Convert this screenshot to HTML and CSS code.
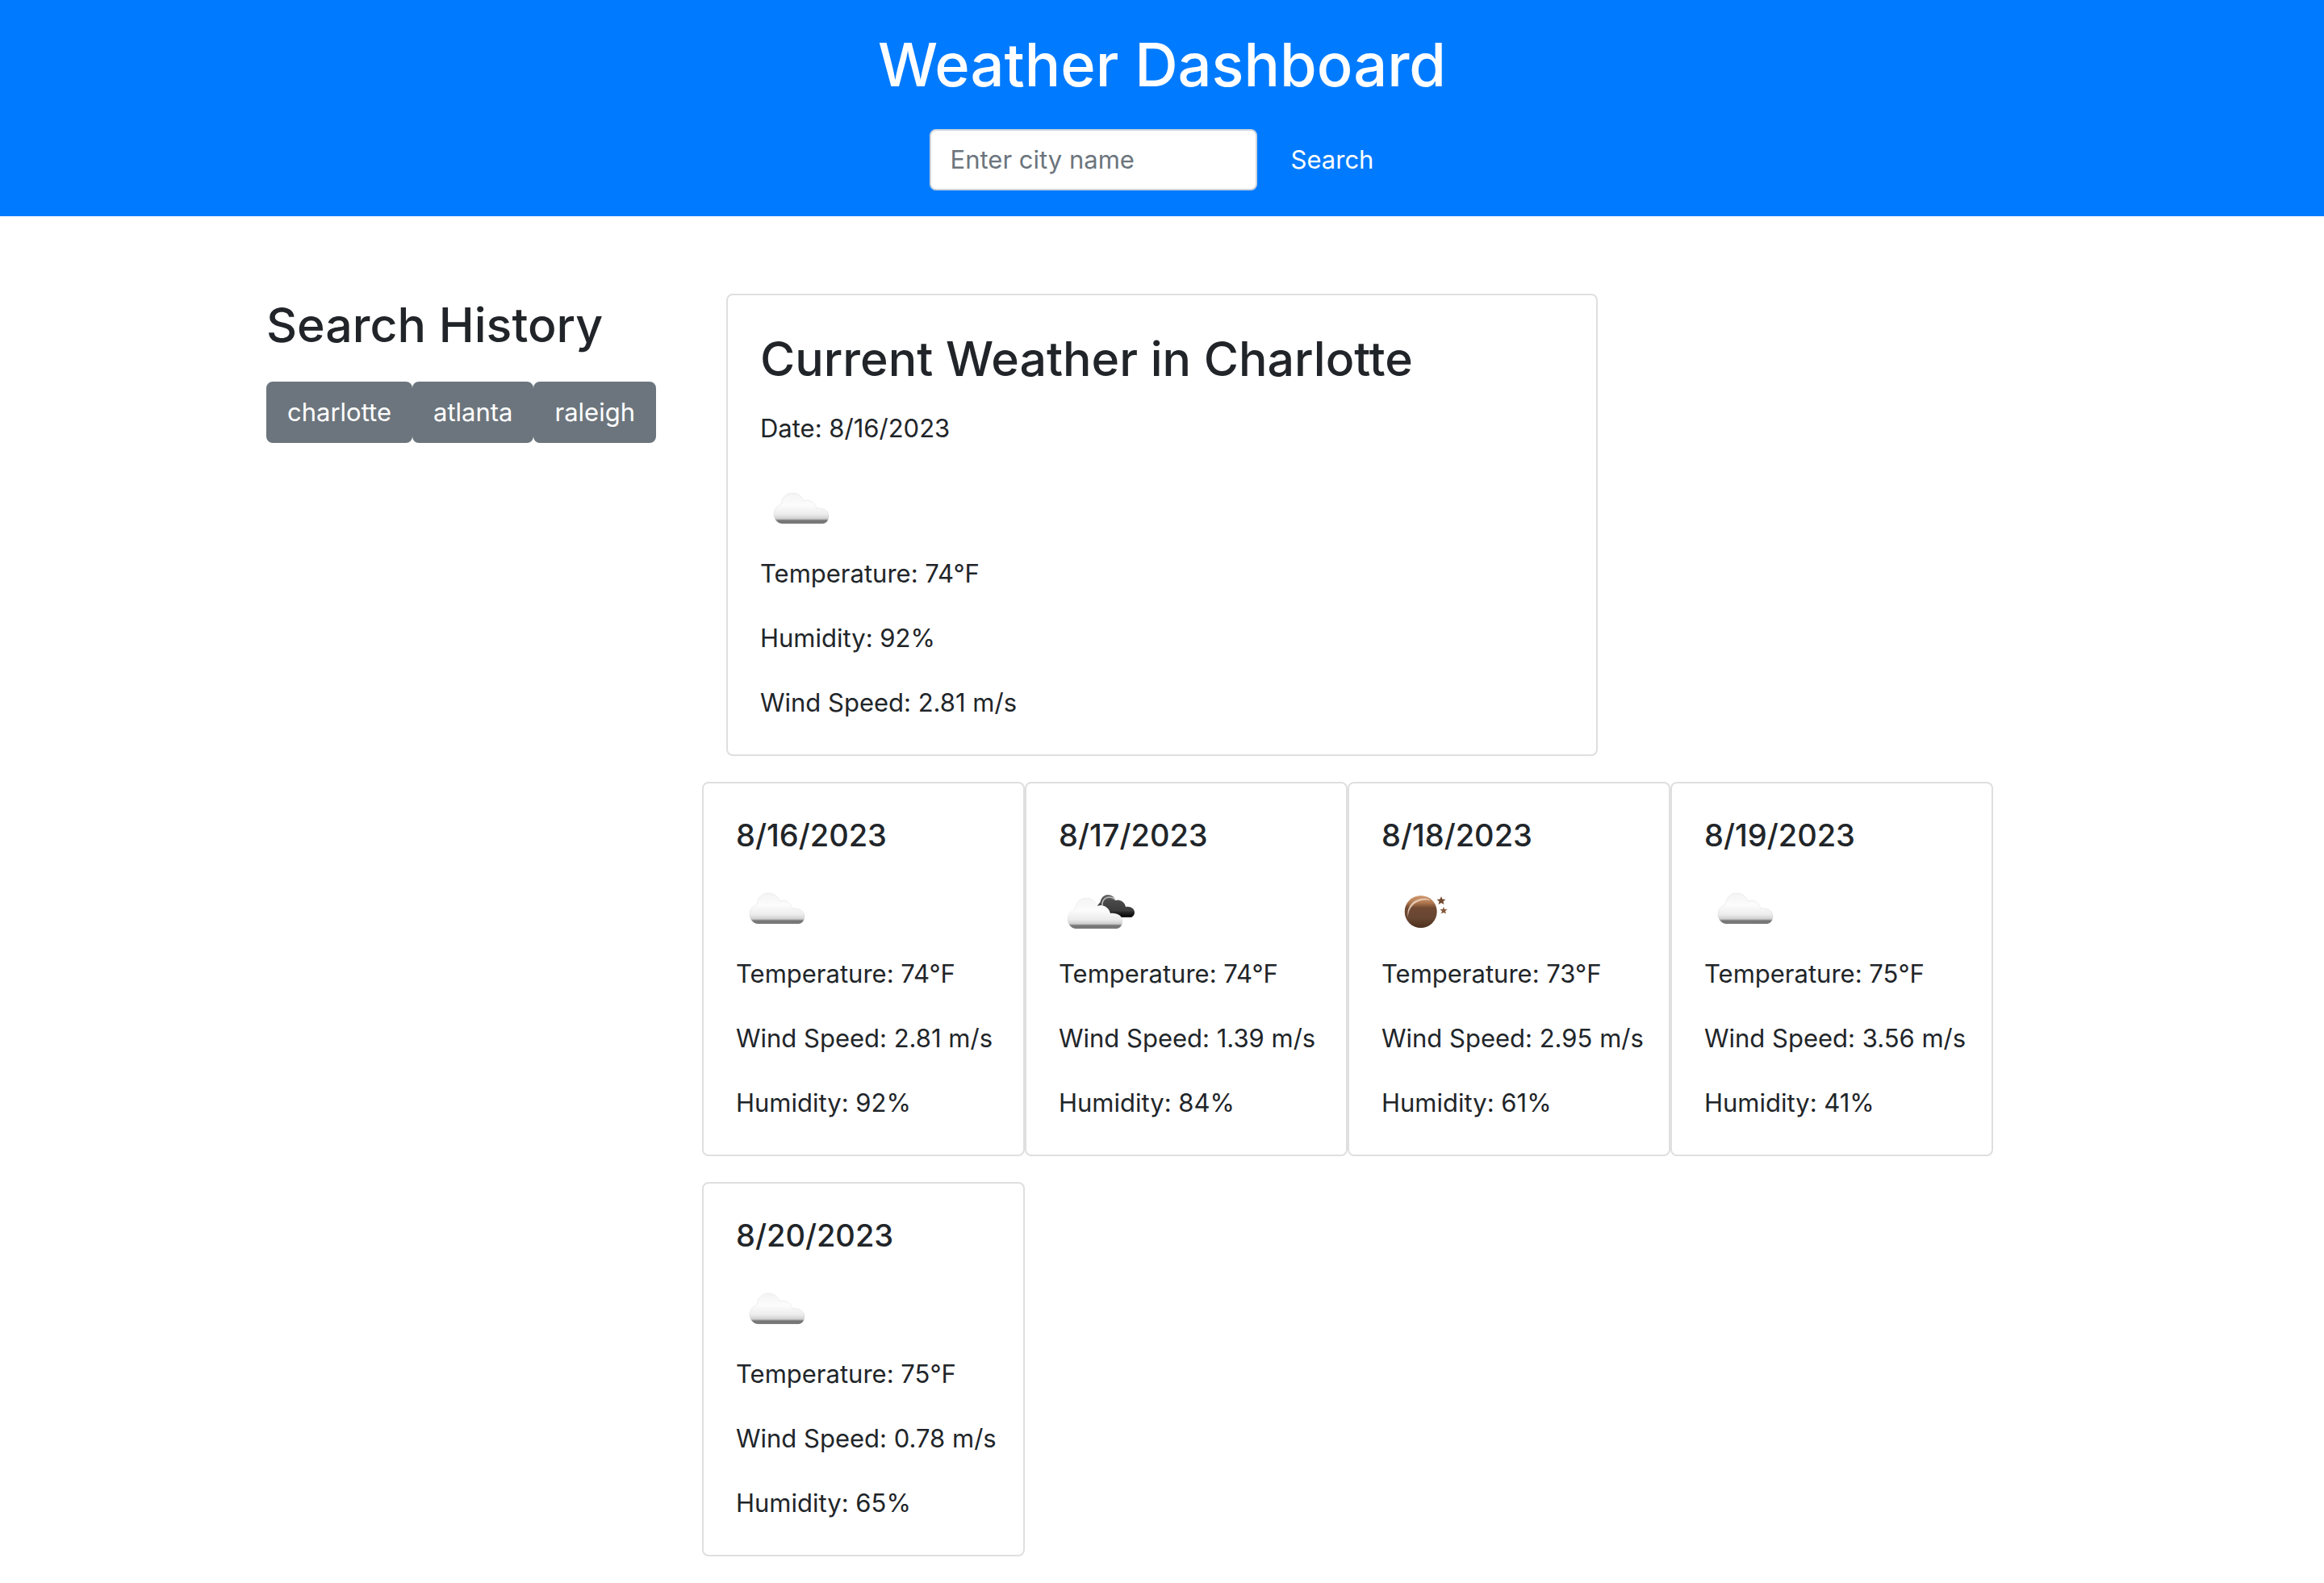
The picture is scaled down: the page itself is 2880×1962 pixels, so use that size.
FILE: index.html
```html
<!DOCTYPE html>
<html lang="en">
<head>
  <meta charset="utf-8">
  <meta name="viewport" content="width=device-width, initial-scale=1">
  <title>Weather Dashboard</title>
  <link rel="stylesheet" href="styles.css">
</head>
<body>
  <svg class="sprite" aria-hidden="true">
    <defs>
      <linearGradient id="cloud-fill" x1="0" y1="0" x2="0" y2="1">
        <stop offset="0" stop-color="#f4f4f4"/>
        <stop offset="0.4" stop-color="#fcfcfc"/>
        <stop offset="0.7" stop-color="#ececec"/>
        <stop offset="0.84" stop-color="#cfcfcf"/>
        <stop offset="0.9" stop-color="#747474"/>
        <stop offset="1" stop-color="#7c7c7c"/>
      </linearGradient>
      <linearGradient id="dark-fill" x1="0" y1="0" x2="0" y2="1">
        <stop offset="0" stop-color="#6a6a6a"/>
        <stop offset="0.3" stop-color="#484848"/>
        <stop offset="0.7" stop-color="#3c3c3c"/>
        <stop offset="0.9" stop-color="#0c0c0c"/>
        <stop offset="1" stop-color="#222222"/>
      </linearGradient>
      <linearGradient id="moon-fill" x1="0" y1="0" x2="0" y2="1">
        <stop offset="0" stop-color="#d29a72"/>
        <stop offset="0.22" stop-color="#b07850"/>
        <stop offset="0.38" stop-color="#704830"/>
        <stop offset="0.7" stop-color="#684630"/>
        <stop offset="1" stop-color="#4c3020"/>
      </linearGradient>
      <filter id="soft" x="-10%" y="-10%" width="120%" height="120%">
        <feGaussianBlur stdDeviation="0.7"/>
      </filter>
      <path id="cloud-shape" d="M27 62C20 61 17 55 17 50C17 44 21 40 26 38C27 30 32 24 40 24C47 24 52 28 54 34C60 31 68 35 70 43C78 42 85 46 85 52C85 57 83 61 78 62Z"/>
    </defs>
    <symbol id="cloud" viewBox="0 0 100 100">
      <use href="#cloud-shape" fill="url(#cloud-fill)" stroke="#000" stroke-opacity="0.06" stroke-width="1" filter="url(#soft)"/>
    </symbol>
    <symbol id="clouds" viewBox="0 0 100 100">
      <g filter="url(#soft)">
        <path d="M48 40C49 37 52 36 52 33C54 28 57 26 61 26C66 26 69 29 70 33C76 31 82 35 83 41C89 40 94 43 94 48C94 51 92 53 90 54H66L50 41Z" fill="url(#dark-fill)"/>
        <path d="M54 40C53 34 57 29 63 29C66 29 68 30 70 32" fill="none" stroke="#bdbdbd" stroke-width="1.5"/>
        <use href="#cloud-shape" x="-6" y="6" fill="url(#cloud-fill)" stroke="#000" stroke-opacity="0.04" stroke-width="1"/>
      </g>
    </symbol>
    <symbol id="moon" viewBox="0 0 100 100">
      <g filter="url(#soft)">
        <circle cx="48.7" cy="47" r="20" fill="url(#moon-fill)"/>
        <path d="M33 54C30 42 39 30 54 30.500C58 31 60 32 60 33C44 30 33 41 33 54Z" fill="#f0d8c4" fill-opacity="0.8"/>
        <path d="M74 28L75.500 31.500L79.500 31.700L76.500 34.200L77.500 38L74 36L70.500 38L71.500 34.200L68.500 31.700L72.500 31.500Z" fill="#70482f"/>
        <path d="M77 41L78.200 44L81.500 44.100L79 46.200L80 49.500L77 48L74 49.500L75 46.200L72.500 44.100L75.800 44Z" fill="#86593c"/>
      </g>
    </symbol>
  </svg>

  <header class="header">
    <h1 class="header-title">Weather Dashboard</h1>
    <form class="search-form">
      <input class="search-input" type="text" placeholder="Enter city name" aria-label="City name">
      <button class="btn btn-primary" type="button">Search</button>
    </form>
  </header>

  <main class="container">
    <aside class="history">
      <h2 class="section-title">Search History</h2>
      <div class="history-list">
        <button class="btn btn-secondary" type="button">charlotte</button>
        <button class="btn btn-secondary" type="button">atlanta</button>
        <button class="btn btn-secondary" type="button">raleigh</button>
      </div>
    </aside>

    <div class="weather">
      <section class="current">
        <div class="card">
          <h2 class="section-title">Current Weather in Charlotte</h2>
          <p>Date: 8/16/2023</p>
          <svg class="icon" role="img" aria-label="Cloudy"><use href="#cloud"/></svg>
          <p>Temperature: 74°F</p>
          <p>Humidity: 92%</p>
          <p>Wind Speed: 2.81 m/s</p>
        </div>
      </section>

      <section class="forecast">
        <article class="card">
          <h3 class="card-title">8/16/2023</h3>
          <svg class="icon" role="img" aria-label="Cloudy"><use href="#cloud"/></svg>
          <p>Temperature: 74°F</p>
          <p>Wind Speed: 2.81 m/s</p>
          <p>Humidity: 92%</p>
        </article>
        <article class="card">
          <h3 class="card-title">8/17/2023</h3>
          <svg class="icon" role="img" aria-label="Broken clouds"><use href="#clouds"/></svg>
          <p>Temperature: 74°F</p>
          <p>Wind Speed: 1.39 m/s</p>
          <p>Humidity: 84%</p>
        </article>
        <article class="card">
          <h3 class="card-title">8/18/2023</h3>
          <svg class="icon" role="img" aria-label="Clear night"><use href="#moon"/></svg>
          <p>Temperature: 73°F</p>
          <p>Wind Speed: 2.95 m/s</p>
          <p>Humidity: 61%</p>
        </article>
        <article class="card">
          <h3 class="card-title">8/19/2023</h3>
          <svg class="icon" role="img" aria-label="Cloudy"><use href="#cloud"/></svg>
          <p>Temperature: 75°F</p>
          <p>Wind Speed: 3.56 m/s</p>
          <p>Humidity: 41%</p>
        </article>
        <article class="card">
          <h3 class="card-title">8/20/2023</h3>
          <svg class="icon" role="img" aria-label="Cloudy"><use href="#cloud"/></svg>
          <p>Temperature: 75°F</p>
          <p>Wind Speed: 0.78 m/s</p>
          <p>Humidity: 65%</p>
        </article>
      </section>
    </div>
  </main>
</body>
</html>
```
FILE: styles.css
```css
*,
*::before,
*::after {
  box-sizing: border-box;
}

body {
  margin: 0;
  background: #fff;
  color: #212529;
  font-family: Inter, "Liberation Sans", sans-serif;
  font-size: 31px;
  line-height: 48px;
}

h1,
h2,
h3,
p {
  margin: 0;
}

h1,
h2,
h3 {
  font-weight: 500;
}

.sprite {
  position: absolute;
  width: 0;
  height: 0;
}

.header {
  display: flex;
  flex-direction: column;
  align-items: center;
  gap: 32px;
  padding: 32px;
  background: #007bff;
  color: #fff;
}

.header-title {
  font-size: 74px;
  line-height: 96px;
}

.search-form {
  display: flex;
  gap: 16px;
}

.search-input {
  width: 406px;
  padding: 12px 24px;
  border: 2px solid #ced4da;
  border-radius: 8px;
  background: #fff;
  color: #495057;
  font: inherit;
}

.search-input::placeholder {
  color: #6c757d;
  opacity: 1;
}

.btn {
  padding: 12px 24px;
  border: 2px solid transparent;
  border-radius: 8px;
  color: #fff;
  font: inherit;
  cursor: pointer;
}

.btn-primary {
  border-color: #007bff;
  background: #007bff;
}

.btn-secondary {
  border-color: #6c757d;
  background: #6c757d;
}

.container {
  display: grid;
  grid-template-columns: 1fr 3fr;
  max-width: 2280px;
  margin: 96px auto 32px;
}

.history {
  padding: 0 0 0 30px;
}

.section-title {
  font-size: 59px;
  line-height: 77px;
}

.history-list {
  display: flex;
  margin-top: 32px;
}

.weather {
  min-width: 0;
}

.current {
  width: 66.6667%;
  padding: 0 30px;
}

.card {
  padding: 40px;
  border: 2px solid #dfdfdf;
  border-radius: 8px;
  background: #fff;
}

.card .section-title,
.card-title {
  margin-bottom: 24px;
}

.card-title {
  font-size: 38px;
  line-height: 48px;
}

.card p + p,
.card p + .icon {
  margin-top: 32px;
}

.icon {
  display: block;
  width: 100px;
  height: 100px;
}

.forecast {
  display: grid;
  grid-template-columns: repeat(auto-fill, 400px);
  row-gap: 32px;
  margin-top: 32px;
}

.forecast .card {
  padding-right: 28px;
  white-space: nowrap;
}
```
